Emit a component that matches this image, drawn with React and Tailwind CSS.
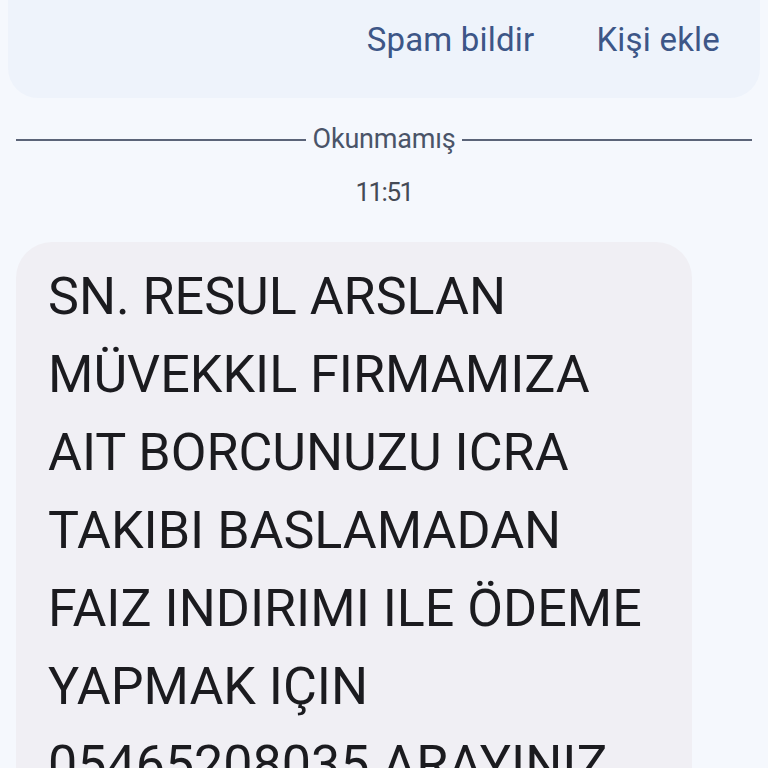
import React from 'react';

const lines = [
  'SN. RESUL ARSLAN',
  'MÜVEKKIL FIRMAMIZA',
  'AIT BORCUNUZU ICRA',
  'TAKIBI BASLAMADAN',
  'FAIZ INDIRIMI ILE ÖDEME',
  'YAPMAK IÇIN',
  '05465208035 ARAYINIZ',
];

export default function App() {
  return (
    <div
      className="w-[768px] h-[768px] overflow-hidden bg-[#f5f8fd] flex flex-col"
      style={{ fontFamily: 'Roboto, "Noto Sans", sans-serif' }}
    >
      {/* Top action card */}
      <div className="mx-2 -mt-8 h-[130px] rounded-[30px] bg-[#eef3fb] flex items-end justify-end gap-[62px] pr-10 pb-[42px] shrink-0">
        <button className="text-[33px] leading-none text-[#3d5687] tracking-[0.2px]">Spam bildir</button>
        <button className="text-[33px] leading-none text-[#3d5687] tracking-[0.2px]">Kişi ekle</button>
      </div>

      {/* Unread divider */}
      <div className="flex items-center mx-4 mt-[28px] shrink-0">
        <div className="flex-1 h-[2px] bg-[#5b6478]" />
        <span className="px-[7px] text-[27px] leading-none text-[#4a5468] tracking-[-0.2px]">Okunmamış</span>
        <div className="flex-1 h-[2px] bg-[#5b6478]" />
      </div>

      <div className="text-center text-[26px] leading-none text-[#444a55] mt-[26px] tracking-[-1.5px] shrink-0">11:51</div>

      {/* Message bubble */}
      <div className="ml-4 mt-[37px] w-[676px] rounded-[36px] bg-[#f0eff4] pl-8 pr-6 pt-4 pb-8 shrink-0">
        {lines.map((l) => (
          <div key={l} className="text-[52px] leading-[78px] text-[#1b1b1f] whitespace-nowrap">
            {l}
          </div>
        ))}
      </div>
    </div>
  );
}
